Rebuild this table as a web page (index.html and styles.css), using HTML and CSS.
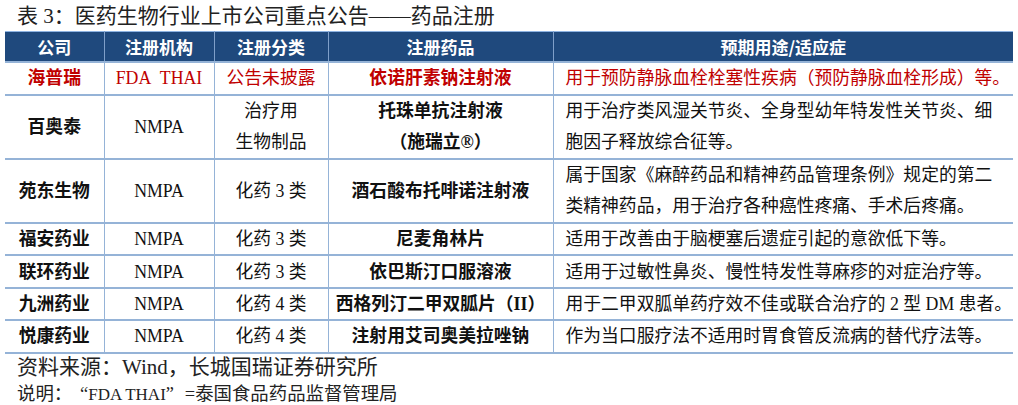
FILE: index.html
```html
<!DOCTYPE html>
<html lang="zh-CN">
<head>
<meta charset="utf-8">
<title>药品注册</title>
<link rel="stylesheet" href="styles.css">
</head>
<body>
<div class="page">
  <div class="title">表 3：医药生物行业上市公司重点公告——药品注册</div>
  <table class="reg">
    <colgroup>
      <col class="c1"><col class="c2"><col class="c3"><col class="c4"><col class="c5">
    </colgroup>
    <thead>
      <tr class="hd">
        <th>公司</th><th>注册机构</th><th>注册分类</th><th>注册药品</th><th>预期用途/适应症</th>
      </tr>
    </thead>
    <tbody>
      <tr class="r1 red">
        <td class="co">海普瑞</td><td>FDA&nbsp; THAI</td><td>公告未披露</td><td class="drug">依诺肝素钠注射液</td><td class="use">用于预防静脉血栓栓塞性疾病（预防静脉血栓形成）等。</td>
      </tr>
      <tr class="r2">
        <td class="co">百奥泰</td><td>NMPA</td><td>治疗用<br>生物制品</td><td class="drug">托珠单抗注射液<br>（施瑞立®）</td><td class="use">用于治疗类风湿关节炎、全身型幼年特发性关节炎、细<br>胞因子释放综合征等。</td>
      </tr>
      <tr class="r2">
        <td class="co">苑东生物</td><td>NMPA</td><td>化药 3 类</td><td class="drug">酒石酸布托啡诺注射液</td><td class="use">属于国家《麻醉药品和精神药品管理条例》规定的第二<br>类精神药品，用于治疗各种癌性疼痛、手术后疼痛。</td>
      </tr>
      <tr class="r3">
        <td class="co">福安药业</td><td>NMPA</td><td>化药 3 类</td><td class="drug">尼麦角林片</td><td class="use">适用于改善由于脑梗塞后遗症引起的意欲低下等。</td>
      </tr>
      <tr class="r3">
        <td class="co">联环药业</td><td>NMPA</td><td>化药 3 类</td><td class="drug">依巴斯汀口服溶液</td><td class="use">适用于过敏性鼻炎、慢性特发性荨麻疹的对症治疗等。</td>
      </tr>
      <tr class="r3">
        <td class="co">九洲药业</td><td>NMPA</td><td>化药 4 类</td><td class="drug">西格列汀二甲双胍片（II）</td><td class="use">用于二甲双胍单药疗效不佳或联合治疗的 2 型 DM 患者。</td>
      </tr>
      <tr class="r3">
        <td class="co">悦康药业</td><td>NMPA</td><td>化药 4 类</td><td class="drug">注射用艾司奥美拉唑钠</td><td class="use">作为当口服疗法不适用时胃食管反流病的替代疗法等。</td>
      </tr>
    </tbody>
  </table>
  <div class="source">资料来源：Wind，长城国瑞证券研究所</div>
  <div class="note">说明：<span class="q qo">“</span><span class="lat">FDA THAI</span><span class="q qc">”</span>=泰国食品药品监督管理局</div>
</div>
</body>
</html>
```

FILE: styles.css
```css
html, body {
  margin: 0;
  padding: 0;
  background: #ffffff;
}

.page {
  width: 1018px;
  height: 405px;
  overflow: hidden;
  font-family: "Liberation Serif", "Noto Sans CJK SC", serif;
  color: #111111;
}

.title {
  padding-left: 17px;
  height: 31px;
  line-height: 32px;
  font-size: 21px;
  color: #222222;
  white-space: nowrap;
}

.reg {
  margin-left: 5px;
  width: 1008px;
  border-collapse: collapse;
  table-layout: fixed;
  border-top: 1px solid #8db3e2;
}

.c1 { width: 99px; }
.c2 { width: 110px; }
.c3 { width: 114px; }
.c4 { width: 225px; }
.c5 { width: 460px; }

.reg th,
.reg td {
  padding: 0;
  text-align: center;
  vertical-align: middle;
  white-space: nowrap;
  font-size: 17.8px;
  border-bottom: 2px solid #95b3d7;
  border-left: 1.5px solid #95b3d7;
}

.reg th:first-child,
.reg td:first-child {
  border-left: none;
}

.hd th {
  height: 29px;
  background: #1f497d;
  color: #ffffff;
  font-family: "Noto Sans CJK SC", sans-serif;
  font-weight: bold;
  font-size: 17px;
  line-height: 29px;
  border-left-color: #7f9fc9;
}

.reg td.co,
.reg td.drug {
  font-family: "Liberation Serif", "Noto Sans CJK SC", serif;
  font-weight: bold;
}

.reg td.use {
  text-align: left;
  padding-left: 12px;
}

.r1 td { height: 31px; line-height: 31px; }
.r2 td { height: 61px; line-height: 31px; }
.r3 td { height: 30.4px; line-height: 30px; }

.red td {
  color: #c00000;
}

.source {
  padding-left: 17px;
  height: 27px;
  line-height: 27px;
  font-size: 21px;
  color: #222222;
  white-space: nowrap;
}

.note {
  padding-left: 17px;
  height: 27px;
  line-height: 27px;
  font-size: 18.4px;
  color: #222222;
  white-space: nowrap;
}

.q {
  display: inline-block;
}

.qo {
  width: 16px;
  text-align: right;
}

.qc {
  width: 19px;
  text-align: left;
}

.lat {
  font-size: 17px;
}
```
